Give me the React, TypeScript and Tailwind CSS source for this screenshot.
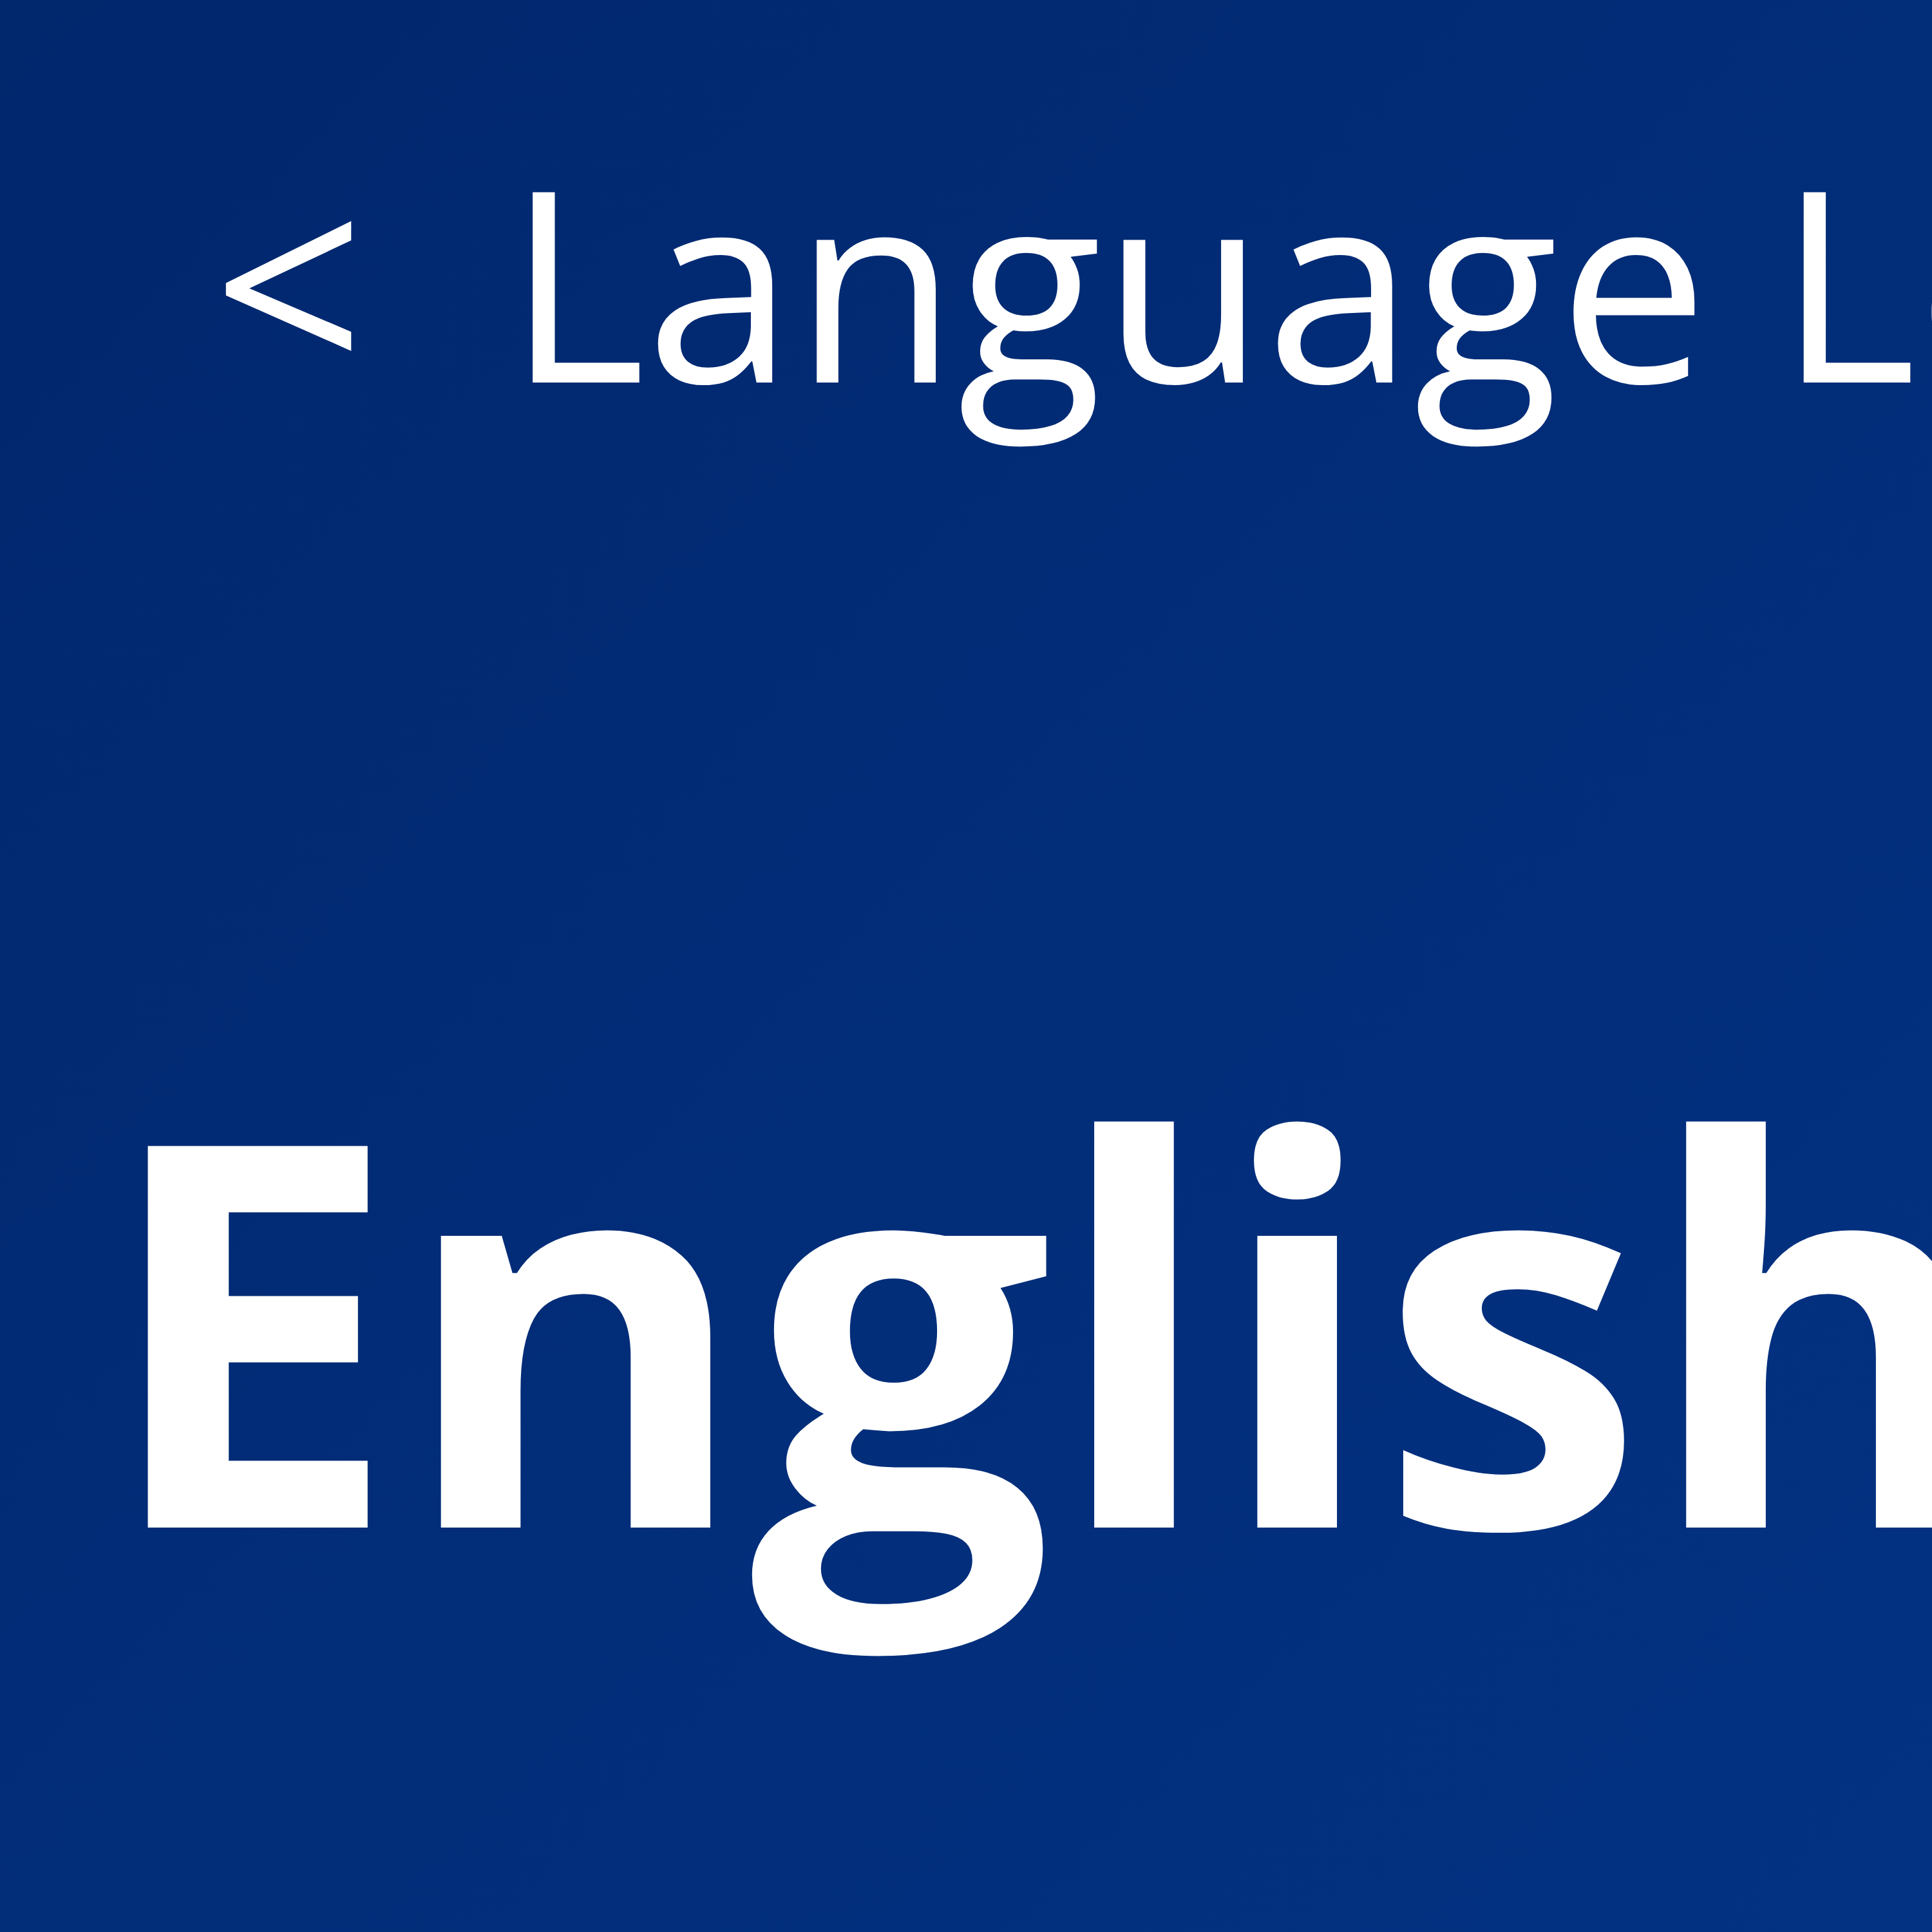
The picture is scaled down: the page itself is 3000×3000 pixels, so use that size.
export default function App() {
  return (
    <div
      className="w-[3000px] h-[3000px] overflow-hidden bg-gradient-to-br from-[#01276d] to-[#033283] text-white whitespace-nowrap"
      style={{ fontFamily: '"Open Sans", sans-serif' }}
    >
      <div className="pt-[226px] pl-[330px] flex items-baseline">
        <span className="text-[414px] leading-none font-normal">&lt;</span>
        <span className="text-[414px] leading-none font-normal ml-[220px]">Language Level</span>
      </div>
      <div className="mt-[995px] pl-[155px]">
        <span className="text-[830px] leading-none font-bold">English</span>
      </div>
    </div>
  );
}
